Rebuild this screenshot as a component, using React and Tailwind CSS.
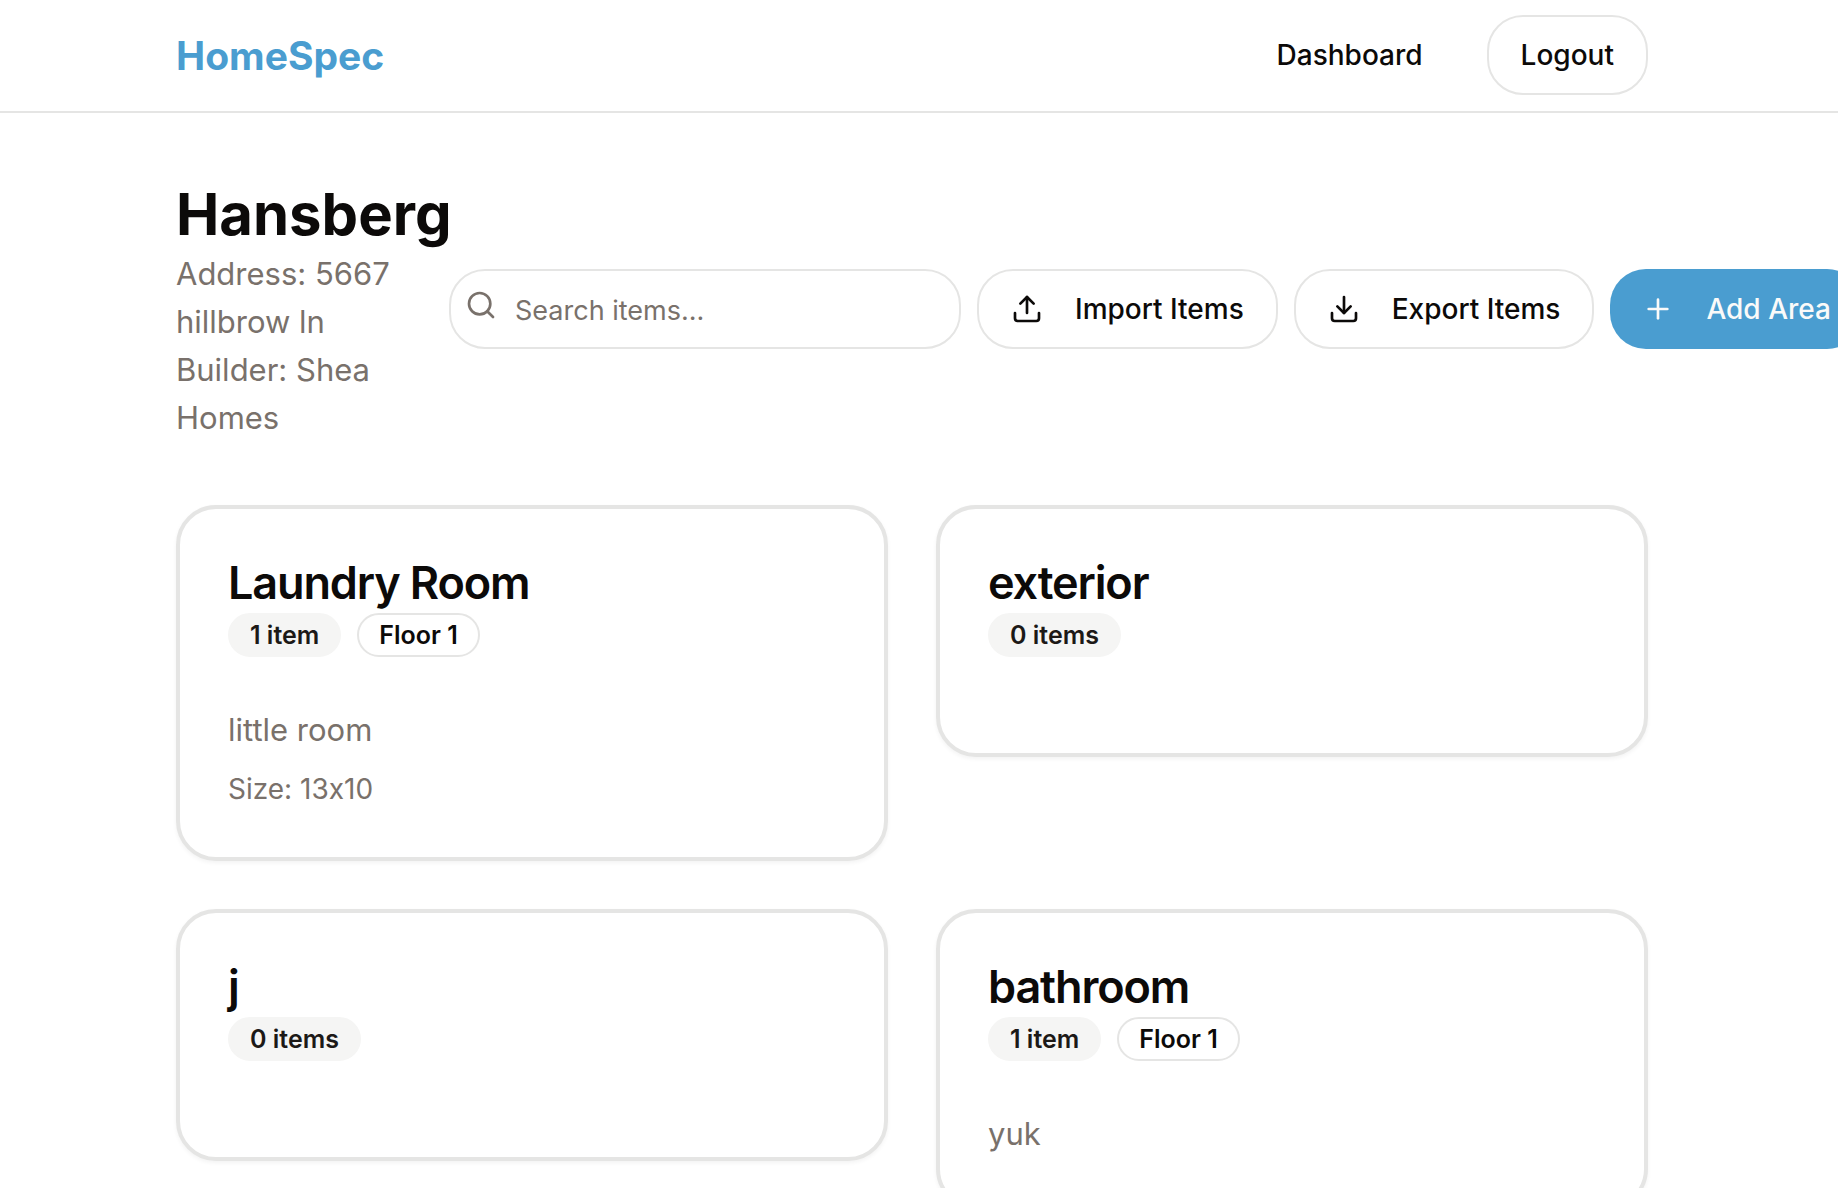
import { Download, Plus, Search, Upload } from "lucide-react";

const areas = [
  { name: "Laundry Room", items: "1 item", floor: "Floor 1", description: "little room", size: "13x10" },
  { name: "exterior", items: "0 items" },
  { name: "j", items: "0 items" },
  { name: "bathroom", items: "1 item", floor: "Floor 1", description: "yuk" },
];

const outlineButton =
  "flex h-20 shrink-0 items-center gap-8 whitespace-nowrap rounded-[36px] border-2 border-[#e5e5e4] bg-white px-8 text-[28px] leading-10 font-medium";

function AreaCard({ area }) {
  return (
    <article className="rounded-[40px] border-4 border-[#e5e5e4] bg-white p-12 shadow-[0_2px_4px_rgba(0,0,0,0.05)]">
      <h2 className="mb-1 text-[45px] leading-[52px] font-semibold tracking-tight">{area.name}</h2>
      <div className="mb-12 flex gap-4 text-[25px] leading-8 font-semibold">
        <span className="rounded-full border-2 border-stone-100 bg-stone-100 px-5 py-1 text-stone-900">
          {area.items}
        </span>
        {area.floor && (
          <span className="rounded-full border-2 border-[#e5e5e4] px-5 py-1">{area.floor}</span>
        )}
      </div>
      {area.description && (
        <p className="pt-0.5 text-[31px] leading-[46px] text-stone-500">{area.description}</p>
      )}
      {area.size && <p className="mt-4 text-[28px] leading-10 text-stone-500">Size: {area.size}</p>}
    </article>
  );
}

export default function App() {
  return (
    <div className="h-screen overflow-hidden bg-white font-['Inter',sans-serif] text-stone-950 [font-feature-settings:'calt'_0]">
      <header className="flex items-center justify-between border-b-2 border-[#e5e5e4] pt-[15px] pr-[190px] pb-4 pl-44">
        <a href="#home" className="pt-0.5 text-[39px] leading-[56px] font-bold text-[#4a9dd0]">
          HomeSpec
        </a>
        <nav className="flex items-center gap-16">
          <a href="#dashboard" className="text-[28px] leading-10 font-medium">
            Dashboard
          </a>
          <button type="button" className={outlineButton}>
            Logout
          </button>
        </nav>
      </header>

      <main className="pt-[63px] pr-[190px] pl-44">
        <section className="mb-[63px] flex items-center">
          <div className="w-[273px] shrink-0">
            <h1 className="pt-0.5 text-[58px] leading-[72px] font-bold">Hansberg</h1>
            <p className="text-[31px] leading-[48px] text-stone-500">Address: 5667 hillbrow ln</p>
            <p className="text-[31px] leading-[48px] text-stone-500">Builder: Shea Homes</p>
          </div>
          <div className="flex items-center gap-4">
            <div className="relative w-[512px] shrink-0">
              <Search className="absolute top-5 left-4 size-8 text-stone-500" aria-hidden="true" />
              <input
                type="search"
                aria-label="Search items"
                placeholder="Search items..."
                className="h-20 w-full rounded-[36px] border-2 border-[#e5e5e4] bg-white pt-0.5 pr-6 pl-16 text-[27px] leading-10 placeholder:text-stone-500"
              />
            </div>
            <button type="button" className={outlineButton}>
              <Upload className="size-8" aria-hidden="true" />
              Import Items
            </button>
            <button type="button" className={outlineButton}>
              <Download className="size-8" aria-hidden="true" />
              Export Items
            </button>
            <button
              type="button"
              className="flex h-20 shrink-0 items-center gap-8 rounded-[36px] bg-[#4a9dd0] px-8 text-[28px] leading-10 font-medium whitespace-nowrap text-stone-50"
            >
              <Plus className="size-8" aria-hidden="true" />
              Add Area
            </button>
          </div>
        </section>

        <section className="grid grid-cols-2 items-start gap-12" aria-label="Areas">
          {areas.map((area) => (
            <AreaCard key={area.name} area={area} />
          ))}
        </section>
      </main>
    </div>
  );
}
